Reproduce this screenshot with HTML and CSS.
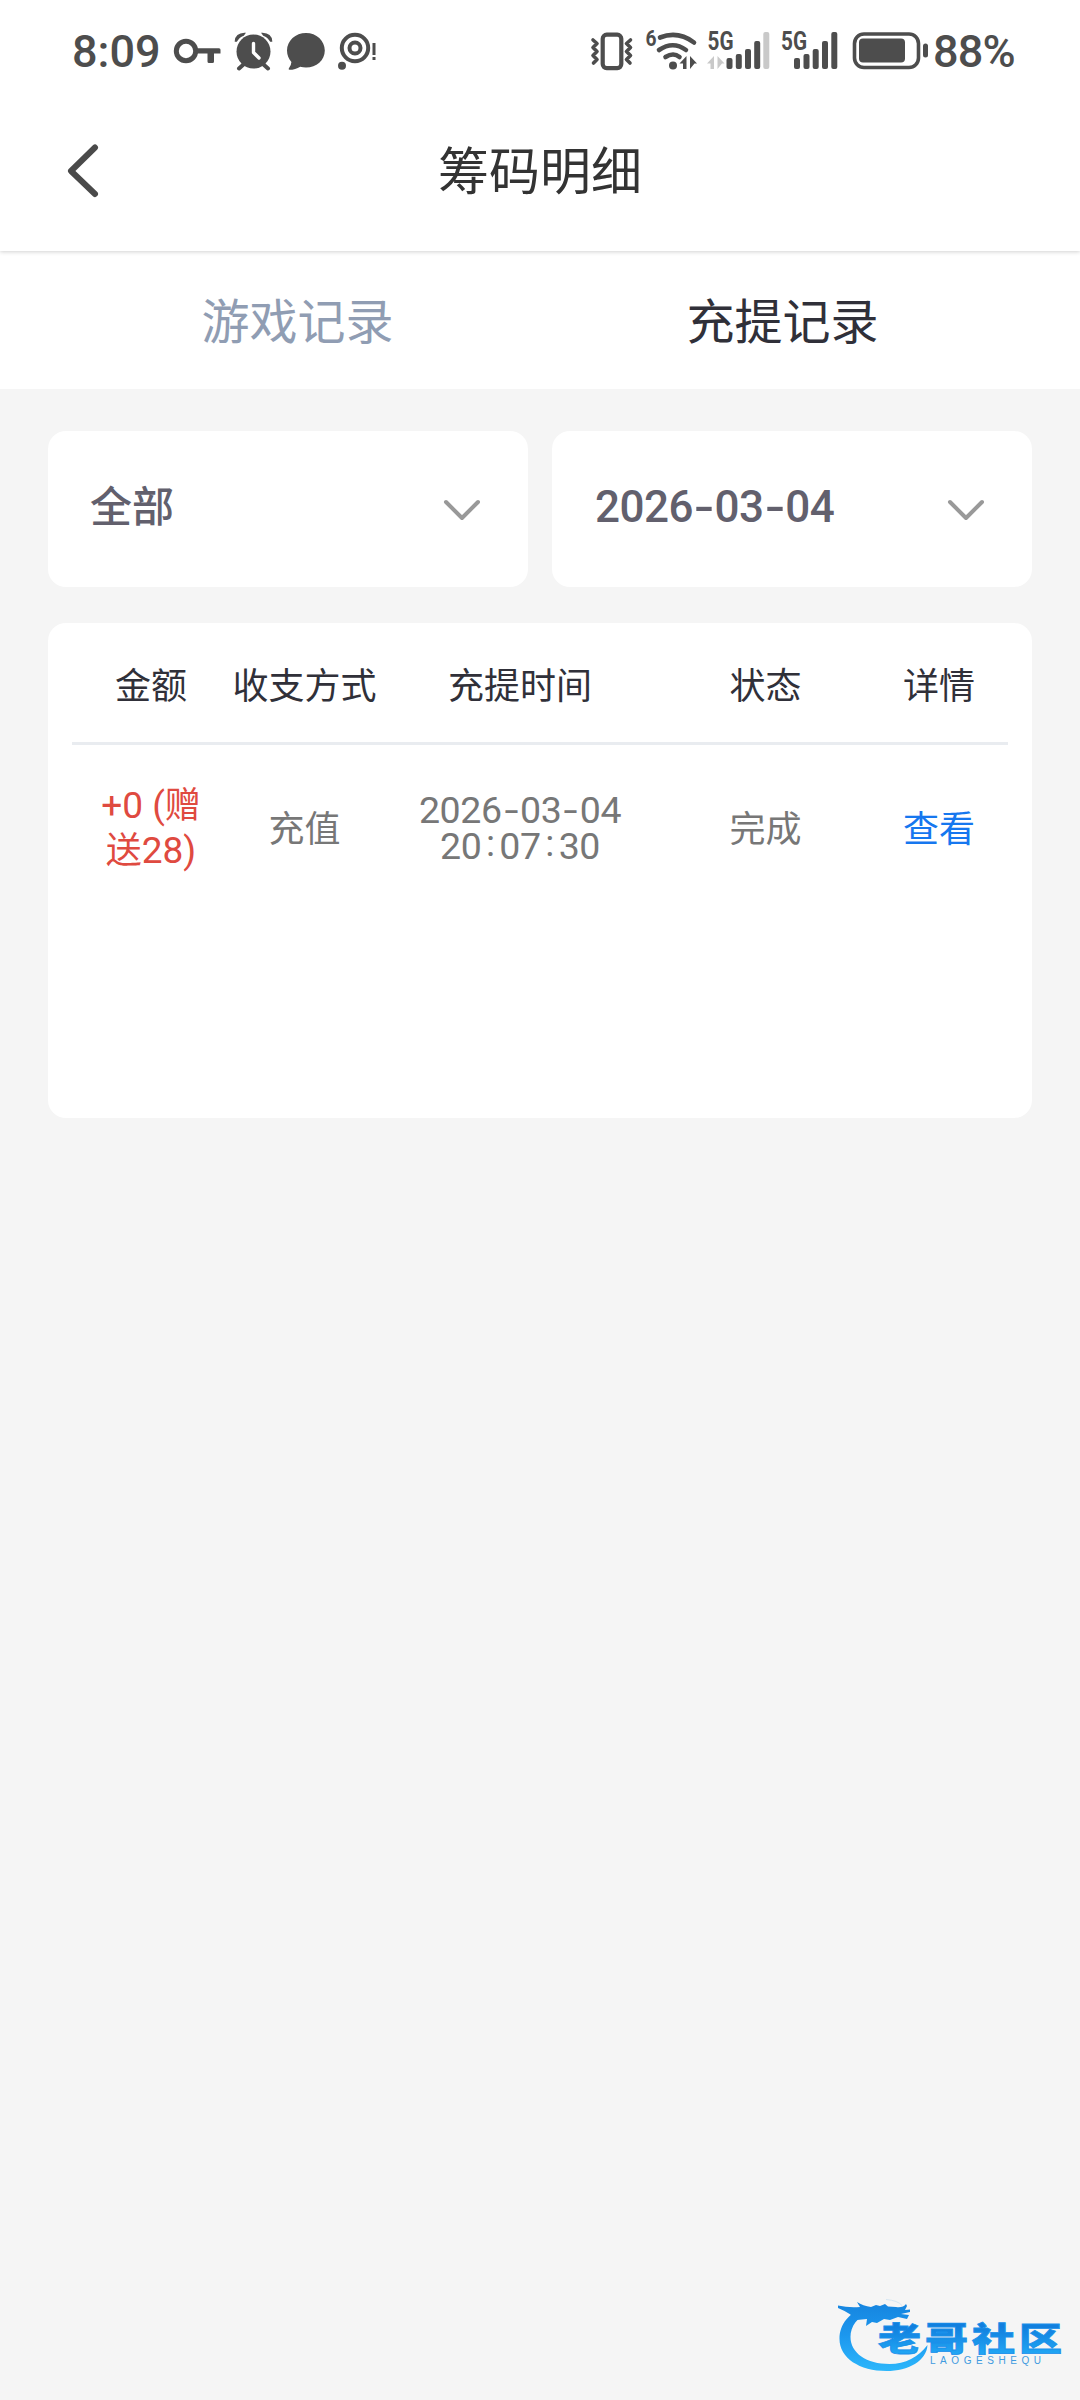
FILE: index.html
```html
<!DOCTYPE html>
<html lang="zh-CN">
<head>
<meta charset="utf-8">
<meta name="viewport" content="width=device-width">
<title>筹码明细</title>
<link rel="stylesheet" href="styles.css">
</head>
<body>
<div class="screen">
  <header class="top">
    <div class="status">
      <div class="group">
        <span class="clock">8:09</span>
        <svg width="58" height="60" viewBox="170 20 58 60"><circle cx="186" cy="51" r="9.7" fill="none" stroke="#4d4d4d" stroke-width="5"/><path d="M196 48.2h23q1.5 0 1.5 1.5v3.800h-6.500v8q0 1.500-1.500 1.500h-3.500q-1.500 0-1.500-1.500v-8H196z" fill="#4d4d4d"/></svg>
        <svg width="52" height="60" viewBox="228 20 52 60"><g stroke="#4d4d4d" stroke-linecap="round" fill="none"><circle cx="253.500" cy="51.500" r="17" fill="#4d4d4d" stroke="none"/><path d="M244 64l-5 4.500M263 64l5 4.500" stroke-width="4"/><path d="M235.500 41q.5-7 9-7.500l-1 1.500q-5 2-7 6zM271.500 41q-.5-7-9-7.500l1 1.500q5 2 7 6z" fill="#4d4d4d" stroke-width="1.500"/><path d="M253.500 43.500v9l5.500 5.500" stroke="#fff" stroke-width="3.400" stroke-linejoin="round"/></g></svg>
        <svg width="52" height="60" viewBox="280 20 52 60"><path d="M306 33c10.500 0 18.800 7.800 18.800 17.500S316.500 67.500 306 67.500c-2 0-4-.3-5.700-.8-3.300 2-7 3.100-10.800 3.100q-1.500-.2-.6-1.500 2.400-3 2.500-6.300c-2.700-3-4.400-7-4.400-11.500C287 40.800 295.500 33 306 33z" fill="#4d4d4d"/></svg>
        <svg width="48" height="60" viewBox="332 20 48 60"><g fill="none" stroke="#4d4d4d"><circle cx="355" cy="48" r="13.200" stroke-width="4"/><circle cx="355" cy="48" r="5.500" stroke-width="4"/></g><circle cx="342" cy="65.700" r="4" fill="#4d4d4d"/><path d="M372.500 43h3v12h-3zM372.500 57h3v3h-3z" fill="#4d4d4d"/></svg>
      </div>
      <div class="group">
        <svg width="58" height="60" viewBox="584 20 58 60"><g fill="none" stroke="#4d4d4d" stroke-width="3.600" stroke-linecap="round" stroke-linejoin="round"><rect x="602.700" y="34.700" width="18.600" height="33.400" rx="4" stroke-width="4.200"/><path d="M593 40l4 3.500-4 4 4 4-4 4 4 4-3.500 3.500M630.500 40l-4 3.500 4 4-4 4 4 4-4 4 3.500 3.500"/></g></svg>
        <svg width="60" height="60" viewBox="642 20 60 60"><text x="645.500" y="46" class="tiny" font-size="22" textLength="11" lengthAdjust="spacingAndGlyphs">6</text><g fill="none" stroke="#4d4d4d" stroke-width="4.600" stroke-linecap="round"><path d="M660 37.500q18-7 34 5"/><path d="M659 50q14-9.500 27 0"/><path d="M665.500 57q8-5 14 0"/></g><circle cx="673" cy="65.500" r="4" fill="#4d4d4d"/><path d="M679.500 63.500l7-7.500V69h-3.500v-5.500zM690 56l7 7.500h-2.500L690 69z" fill="#4d4d4d"/></svg>
        <svg width="74" height="60" viewBox="702 20 74 60"><text x="707.500" y="50" class="tiny" font-size="25" textLength="26" lengthAdjust="spacingAndGlyphs">5G</text><path d="M707 63.500l7-7.500V69h-3.500v-5.500zM717.500 56l7 7.500h-2.500l-4.500 5.500z" fill="#c9c9c9"/><g fill="#4d4d4d"><rect x="726.500" y="58" width="6" height="11" rx="2"/><rect x="735.800" y="54" width="6" height="15" rx="2"/><rect x="745" y="49" width="6" height="20" rx="2"/><rect x="754.200" y="41" width="6" height="28" rx="2"/></g><rect x="763.300" y="32" width="6" height="37" rx="2" fill="#c9c9c9"/></svg>
        <svg width="70" height="60" viewBox="776 20 70 60"><text x="781" y="50" class="tiny" font-size="25" textLength="26" lengthAdjust="spacingAndGlyphs">5G</text><g fill="#4d4d4d"><rect x="794" y="58" width="6" height="11" rx="2"/><rect x="803.500" y="54" width="6" height="15" rx="2"/><rect x="812.700" y="49" width="6" height="20" rx="2"/><rect x="822" y="41" width="6" height="28" rx="2"/><rect x="831.300" y="32" width="6" height="37" rx="2"/></g></svg>
        <svg width="86" height="60" viewBox="846 20 86 60"><rect x="854.500" y="34" width="64" height="33.500" rx="9.500" fill="none" stroke="#4d4d4d" stroke-width="3.600"/><rect x="859" y="38.500" width="46" height="24" rx="4" fill="#4d4d4d"/><rect x="923" y="43.500" width="5" height="14" rx="2.500" fill="#4d4d4d"/></svg>
        <span class="percent">88%</span>
      </div>
    </div>
    <div class="nav">
      <svg class="back" width="34" height="56" viewBox="0 0 34 56"><path d="M30 4.500L6 28 30 51" fill="none" stroke="#4a4a4a" stroke-width="6" stroke-linecap="round" stroke-linejoin="round"/></svg>
      <h1 class="title">筹码明细</h1>
    </div>
  </header>
  <nav class="tabs">
    <span class="tab">游戏记录</span>
    <span class="tab tab-active">充提记录</span>
  </nav>
  <main class="content">
    <div class="filters">
      <div class="select">
        <span>全部</span>
        <svg class="chevron" width="38" height="24" viewBox="0 0 38 24"><path d="M3 3l16 16L35 3" fill="none" stroke="#999" stroke-width="4" stroke-linecap="round" stroke-linejoin="round"/></svg>
      </div>
      <div class="select">
        <span class="date">2026<i class="dash">-</i>03<i class="dash">-</i>04</span>
        <svg class="chevron" width="38" height="24" viewBox="0 0 38 24"><path d="M3 3l16 16L35 3" fill="none" stroke="#999" stroke-width="4" stroke-linecap="round" stroke-linejoin="round"/></svg>
      </div>
    </div>
    <section class="records">
      <div class="row head"><span>金额</span><span>收支方式</span><span>充提时间</span><span>状态</span><span>详情</span></div>
      <div class="row item">
        <span class="amount"><b class="num">+0 (</b>赠<br>送<b class="num">28)</b></span>
        <span class="cell">充值</span>
        <span class="when">2026<i class="dash">-</i>03<i class="dash">-</i>04<br>20<i class="colon">:</i>07<i class="colon">:</i>30</span>
        <span class="cell">完成</span>
        <a class="cell view">查看</a>
      </div>
    </section>
  </main>
  <svg class="brand" width="240" height="90" viewBox="830 2290 240 90">
    <defs><linearGradient id="blue" gradientUnits="userSpaceOnUse" x1="0" y1="2300" x2="0" y2="2370"><stop offset="0" stop-color="#1583de"/><stop offset=".5" stop-color="#1c97ee"/><stop offset="1" stop-color="#2cb6fb"/></linearGradient>
    <linearGradient id="word" x1="0" y1="0" x2="0" y2="1"><stop offset=".3" stop-color="#117fde"/><stop offset=".9" stop-color="#22a8f5"/></linearGradient></defs>
    <path d="M866 2308C849 2312 839.500 2324 839.500 2339c0 19 20 32 47 32 22 0 40-10 41-26-9 12-22 19-38 19-23 0-39-11-39-27 0-11 7-20 19-25z" fill="url(#blue)"/>
    <path d="M838 2305.500q11 2.500 22 1.500l-3-5q6 4 14 5l5-2 4 1 5-2 3 2.500 8 .5q7 1 10-3l1 2-2 4 5-.5v2.500l-9 2 8 1-2 4-9-2-8 3-6-1-7 4-5-1-6 4 1-7-10 1q-7-7-19-12z" fill="url(#blue)"/>
    <path d="M886 2299.500q12 1 16 6" stroke="#d5e6f3" fill="none"/>
    <text transform="translate(878 2350.500) scale(1 .76)" class="brand-name" textLength="184" lengthAdjust="spacing">老哥社区</text>
    <text x="930" y="2364" class="brand-latin" textLength="111">LAOGESHEQU</text>
  </svg>
</div>
</body>
</html>
```
FILE: styles.css
```css
* { box-sizing: border-box; }
body { margin: 0; background: #f5f5f5; font-family: Roboto, "Noto Sans CJK SC", sans-serif; }
svg { display: block; flex: none; }
i, b { font-style: normal; font-weight: inherit; }
.screen { position: relative; width: 1080px; height: 2400px; overflow: hidden; background: #f5f5f5; display: flex; flex-direction: column; }
.top { position: relative; z-index: 1; height: 251px; background: #fff; box-shadow: 0 1px 4px rgba(0, 0, 0, .18); }
.status { display: flex; justify-content: space-between; height: 90px; padding-top: 20px; color: #4d4d4d; }
.group { display: flex; height: 60px; }
.clock, .percent { font-size: 45px; line-height: 64px; font-weight: 500; white-space: nowrap; }
.clock { width: 170px; padding-left: 72px; }
.percent { width: 148px; padding-left: 1px; letter-spacing: -.8px; }
.tiny { font-family: Roboto, sans-serif; font-weight: 700; fill: #4d4d4d; }
.nav { display: grid; grid-template-columns: 140px 1fr 140px; align-items: center; height: 161px; }
.back { margin-left: 65px; }
.title { margin: 0; padding-top: 4px; text-align: center; font-size: 51px; font-weight: 400; line-height: 76px; color: #333; }
.tabs { display: flex; height: 138px; padding: 0 55px; background: #fff; }
.tab { flex: 1; text-align: center; font-size: 48px; line-height: 144px; color: #909db3; }
.tab-active { color: #303039; }
.content { padding: 42px 48px; }
.filters { display: grid; grid-template-columns: 1fr 1fr; gap: 24px; }
.select { display: flex; align-items: center; justify-content: space-between; height: 156px; padding: 0 47px 0 42px; border-radius: 18px; background: #fff; color: #62606d; font-size: 42px; font-weight: 500; }
.select > span { line-height: 60px; padding-bottom: 2px; }
.select .date { font-size: 44px; padding: 0 0 4px 1px; letter-spacing: -.5px; }
.chevron { margin-top: 4px; }
.dash { display: inline-block; width: .49em; text-align: center; transform: scaleX(1.35); }
.records { height: 495px; margin-top: 36px; padding: 0 24px; border-radius: 18px; background: #fff; }
.row { display: grid; grid-template-columns: 158px 149px 282px 209px 138px; align-items: center; text-align: center; font-size: 36px; }
.head { height: 122px; border-bottom: 3px solid #e9ecf0; color: #303039; }
.item { height: 166px; color: #777; }
.cell { padding-bottom: 4px; }
.amount { padding-top: 1px; line-height: 45px; color: #df4a40; }
.num { font-size: 37px; line-height: 1; }
.when { font-size: 37.5px; line-height: 36px; letter-spacing: -.4px; }
.colon { display: inline-block; width: 18px; text-align: center; transform: translateY(-3px); }
.view { color: #1677ef; }
.brand { position: absolute; right: 10px; bottom: 20px; }
.brand-name { font-family: "Noto Sans CJK SC", sans-serif; font-size: 43px; font-weight: 900; fill: url(#word); stroke: #1a90ea; stroke-width: 1px; }
.brand-latin { font-family: "Liberation Sans", sans-serif; font-size: 10px; fill: #3f9be0; }
```
